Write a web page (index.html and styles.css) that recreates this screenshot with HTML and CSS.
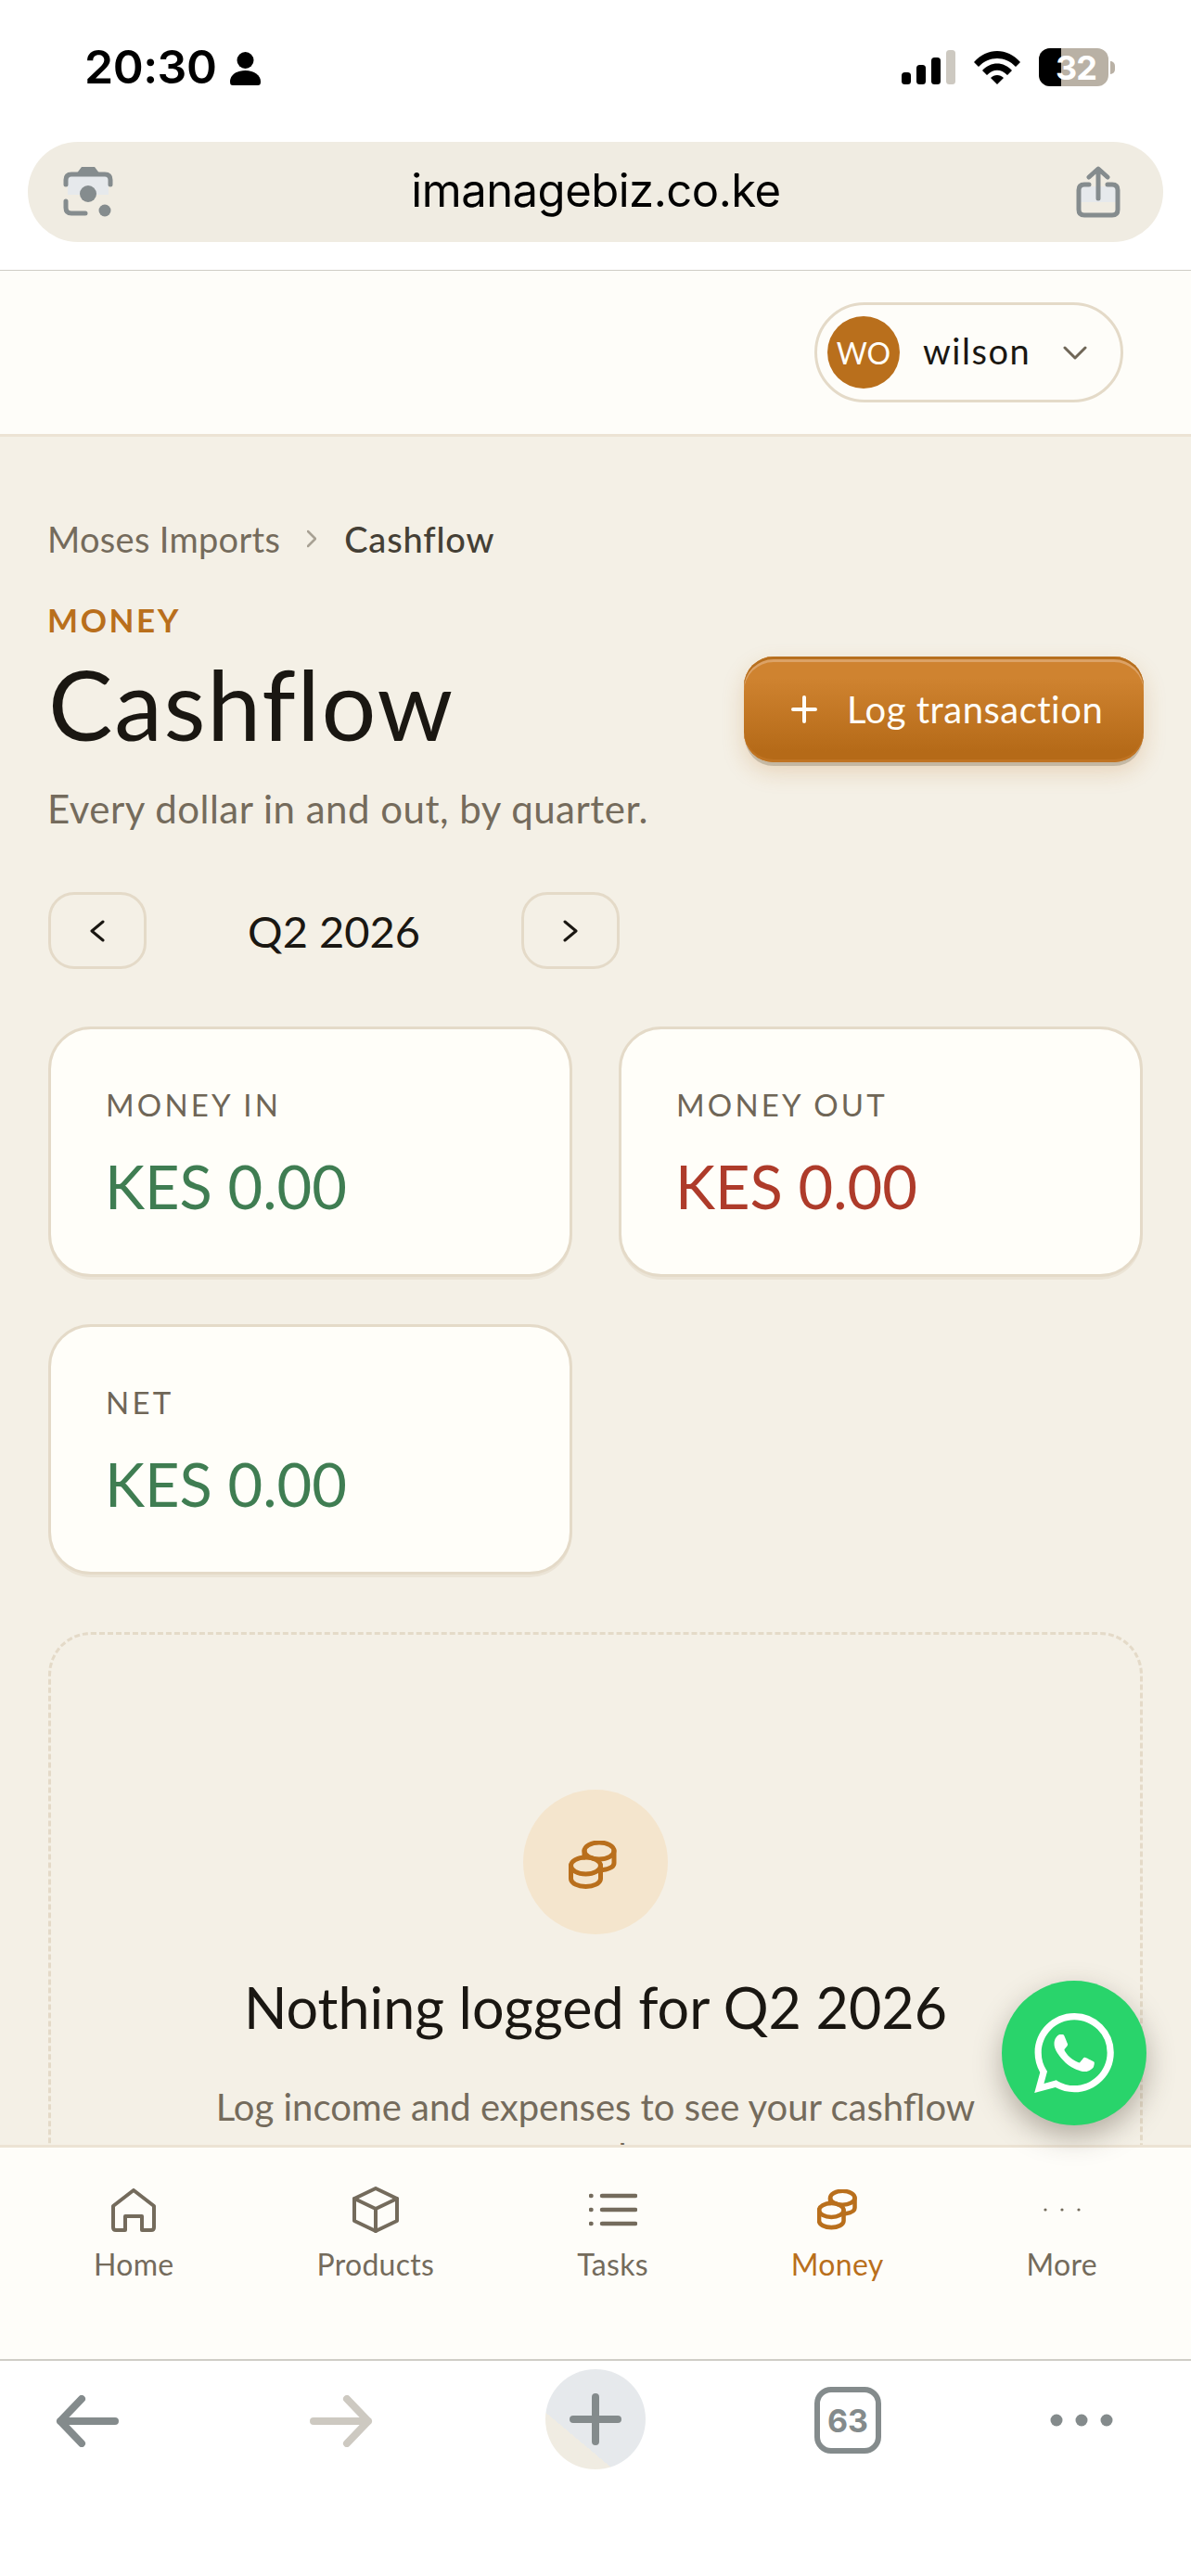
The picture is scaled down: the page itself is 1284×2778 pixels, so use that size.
FILE: index.html
```html
<!DOCTYPE html>
<html lang="en">
<head>
<meta charset="utf-8">
<title>Cashflow</title>
<link rel="stylesheet" href="styles.css">
</head>
<body>
<div class="phone">
  <div class="browser-top">
    <div class="status">
      <div class="status-left">
        <span class="clock">20:30</span>
        <svg class="person" width="33" height="36" viewBox="0 0 33 36"><circle cx="16.500" cy="9" r="9"/><path d="M0 32C0 25 7 20 16.500 20S33 25 33 32C33 35 32 36 30 36H3C1 36 0 35 0 32Z"/></svg>
      </div>
      <div class="status-right">
        <svg width="58" height="37" viewBox="0 0 58 37"><rect x="0" y="24" width="10" height="13" rx="3.500"/><rect x="16" y="16" width="10" height="21" rx="3.500"/><rect x="32" y="8" width="10" height="29" rx="3.500"/><rect x="48" y="0" width="10" height="37" rx="3.500" fill="#cdc9c1"/></svg>
        <svg width="50" height="37" viewBox="0 0 50 37"><path d="M0 13C14 -3 36 -3 50 13L45 18C34 6 16 6 5 18Z"/><path d="M9 22C18 12 32 12 41 22L36 27C29 20 21 20 14 27Z"/><path d="M18 30C22 26 28 26 32 30L25 37Z"/></svg>
        <div class="battery">
          <div class="battery-body"><span class="battery-fill"></span><span class="battery-num">32</span></div>
          <span class="battery-tip"></span>
        </div>
      </div>
    </div>
    <div class="address">
      <svg class="addr-icon" width="54" height="56" viewBox="0 0 54 56" fill="none" stroke="#858c8e" stroke-width="5" stroke-linecap="round"><rect x="5" y="11" width="44" height="20" fill="#e6e9ec" stroke="none"/><path d="M3 20V15C3 11 5 9 9 9H45C49 9 51 11 51 15V20"/><path d="M3 38V45C3 49 5 51 9 51H24"/><path d="M18 7L21 3H33L36 7Z" fill="#858c8e" stroke-width="4"/><circle cx="27" cy="30" r="9" fill="#858c8e" stroke="none"/><circle cx="45" cy="48" r="6.500" fill="#858c8e" stroke="none"/></svg>
      <span class="addr-text">imanagebiz.co.ke</span>
      <svg class="addr-icon" width="48" height="56" viewBox="0 0 48 56" fill="none" stroke="#858c8e" stroke-width="5" stroke-linecap="round" stroke-linejoin="round"><rect x="5" y="22" width="38" height="17" fill="#e6e9ec" stroke="none"/><path d="M14 20H9C5 20 3 22 3 26V47C3 51 5 53 9 53H39C43 53 45 51 45 47V26C45 22 43 20 39 20H34"/><path d="M24 35V4M14 12L24 3L34 12"/></svg>
    </div>
  </div>

  <header class="app-header">
    <div class="user-pill">
      <span class="avatar">WO</span>
      <span class="user-name">wilson</span>
      <svg width="26" height="15" viewBox="0 0 26 15" fill="none" stroke="#6f6657" stroke-width="3" stroke-linecap="round" stroke-linejoin="round"><path d="M2 2L13 13L24 2"/></svg>
    </div>
  </header>

  <main class="content">
    <nav class="crumbs">
      <span class="crumb">Moses Imports</span>
      <svg width="10" height="20" viewBox="0 0 10 20" fill="none" stroke="#a8a194" stroke-width="2.500" stroke-linecap="round" stroke-linejoin="round"><path d="M1 2L9 10L1 18"/></svg>
      <span class="crumb-current">Cashflow</span>
    </nav>
    <div class="page-head">
      <div class="page-titles">
        <div class="eyebrow">MONEY</div>
        <h1 class="title">Cashflow</h1>
        <p class="subtitle">Every dollar in and out, by quarter.</p>
      </div>
      <button class="primary-btn">
        <svg width="28" height="30" viewBox="0 0 28 30" fill="none" stroke="#fffdf8" stroke-width="4" stroke-linecap="round"><path d="M14 2V28M2 15H26"/></svg>
        <span>Log transaction</span>
      </button>
    </div>

    <div class="period">
      <button class="period-btn"><svg width="18" height="24" viewBox="0 0 18 24" fill="none" stroke="#1a1712" stroke-width="3" stroke-linecap="round" stroke-linejoin="round"><path d="M15 2L3 12L15 22"/></svg></button>
      <span class="period-label">Q2 2026</span>
      <button class="period-btn"><svg width="18" height="24" viewBox="0 0 18 24" fill="none" stroke="#1a1712" stroke-width="3" stroke-linecap="round" stroke-linejoin="round"><path d="M3 2L15 12L3 22"/></svg></button>
    </div>

    <section class="stats">
      <div class="stat">
        <div class="stat-label">MONEY IN</div>
        <div class="stat-value pos">KES 0.00</div>
      </div>
      <div class="stat">
        <div class="stat-label">MONEY OUT</div>
        <div class="stat-value neg">KES 0.00</div>
      </div>
      <div class="stat">
        <div class="stat-label">NET</div>
        <div class="stat-value pos">KES 0.00</div>
      </div>
    </section>

    <section class="empty">
      <div class="empty-icon">
        <svg width="52" height="54" viewBox="0 0 52 54" fill="none" stroke="#b96f1c" stroke-width="5" stroke-linecap="round" stroke-linejoin="round"><ellipse cx="33" cy="11" rx="16" ry="9"/><path d="M49 11V24C49 28 44 30.500 37 31.500M17 11V18"/><ellipse cx="18.500" cy="27" rx="16" ry="9"/><path d="M2.500 27V41C2.500 46 10 49.500 18.500 49.500S34.500 46 34.500 41V27"/></svg>
      </div>
      <h2 class="empty-title">Nothing logged for Q2 2026</h2>
      <p class="empty-text">Log income and expenses to see your cashflow trends.</p>
    </section>
  </main>

  <nav class="tabbar">
    <div class="tab">
      <svg class="tab-icon" width="48" height="47" viewBox="0 0 48 47" fill="none" stroke="#746b5c" stroke-width="4" stroke-linecap="round" stroke-linejoin="round"><path d="M24 2L46 19V42C46 44 45 45 43 45H33V30H15V45H5C3 45 2 44 2 42V19Z"/></svg>
      <span class="tab-label">Home</span>
    </div>
    <div class="tab">
      <svg class="tab-icon" width="50" height="50" viewBox="0 0 50 50" fill="none" stroke="#746b5c" stroke-width="4" stroke-linecap="round" stroke-linejoin="round"><path d="M25 2L48 13V37L25 48L2 37V13Z"/><path d="M2 13L25 24L48 13M25 24V48"/></svg>
      <span class="tab-label">Products</span>
    </div>
    <div class="tab">
      <svg class="tab-icon" width="52" height="36" viewBox="0 0 52 36" fill="none" stroke="#746b5c" stroke-width="4.500" stroke-linecap="round"><path d="M14 3H50M14 18H50M14 33H50"/><path d="M2 3H2.500M2 18H2.500M2 33H2.500"/></svg>
      <span class="tab-label">Tasks</span>
    </div>
    <div class="tab tab-active">
      <svg class="tab-icon" width="43" height="45" viewBox="0 0 52 54" fill="none" stroke="#b96f1c" stroke-width="5.500" stroke-linecap="round" stroke-linejoin="round"><ellipse cx="33" cy="11" rx="16" ry="9"/><path d="M49 11V24C49 28 44 30.500 37 31.500M17 11V18"/><ellipse cx="18.500" cy="27" rx="16" ry="9"/><path d="M2.500 27V41C2.500 46 10 49.500 18.500 49.500S34.500 46 34.500 41V27"/></svg>
      <span class="tab-label">Money</span>
    </div>
    <div class="tab">
      <svg class="tab-icon" width="40" height="6" viewBox="0 0 40 6" fill="#746b5c"><circle cx="2" cy="3" r="1.600"/><circle cx="20" cy="3" r="1.600"/><circle cx="38" cy="3" r="1.600"/></svg>
      <span class="tab-label">More</span>
    </div>
  </nav>

  <footer class="browser-bottom">
    <svg class="tool-arrow" width="68" height="56" viewBox="0 0 68 56" fill="none" stroke="#848b8c" stroke-width="8" stroke-linecap="round" stroke-linejoin="round"><path d="M64 28H5M28 4L5 28L28 52"/></svg>
    <svg class="tool-arrow" width="68" height="56" viewBox="0 0 68 56" fill="none" stroke="#cdc9c1" stroke-width="8" stroke-linecap="round" stroke-linejoin="round"><path d="M4 28H63M40 4L63 28L40 52"/></svg>
    <div class="new-tab">
      <svg width="56" height="56" viewBox="0 0 56 56" fill="none" stroke="#848b8c" stroke-width="8" stroke-linecap="round"><path d="M28 4V52M4 28H52"/></svg>
    </div>
    <div class="tab-count">63</div>
    <svg class="tool-more" width="68" height="16" viewBox="0 0 68 16" fill="#848b8c"><circle cx="7" cy="8" r="6.500"/><circle cx="34" cy="8" r="6.500"/><circle cx="61" cy="8" r="6.500"/></svg>
  </footer>

  <button class="wa-fab">
    <svg width="86" height="86" viewBox="0 0 24 24" fill="#fff"><path d="M17.472 14.382c-.297-.149-1.758-.867-2.030-.967-.273-.099-.471-.148-.670.150-.197.297-.767.966-.940 1.164-.173.199-.347.223-.644.075-.297-.150-1.255-.463-2.390-1.475-.883-.788-1.480-1.761-1.653-2.059-.173-.297-.018-.458.130-.606.134-.133.298-.347.446-.520.149-.174.198-.298.298-.497.099-.198.050-.371-.025-.520-.075-.149-.669-1.612-.916-2.207-.242-.579-.487-.500-.669-.510-.173-.008-.371-.010-.570-.010-.198 0-.520.074-.792.372-.272.297-1.040 1.016-1.040 2.479 0 1.462 1.065 2.875 1.213 3.074.149.198 2.096 3.200 5.077 4.487.709.306 1.262.489 1.694.625.712.227 1.360.195 1.871.118.571-.085 1.758-.719 2.006-1.413.248-.694.248-1.289.173-1.413-.074-.124-.272-.198-.570-.347m-5.421 7.403h-.004a9.870 9.870 0 01-5.031-1.378l-.361-.214-3.741.982.998-3.648-.235-.374a9.860 9.860 0 01-1.510-5.260c.001-5.450 4.436-9.884 9.888-9.884 2.640 0 5.122 1.030 6.988 2.898a9.825 9.825 0 012.893 6.994c-.003 5.450-4.437 9.884-9.885 9.884m8.413-18.297A11.815 11.815 0 0012.050 0C5.495 0 .160 5.335.157 11.892c0 2.096.547 4.142 1.588 5.945L.057 24l6.305-1.654a11.882 11.882 0 005.683 1.448h.005c6.554 0 11.890-5.335 11.893-11.893a11.821 11.821 0 00-3.480-8.413z"/></svg>
  </button>
</div>
</body>
</html>
```

FILE: styles.css
```css
* { box-sizing: border-box; }
html, body { margin: 0; padding: 0; }
body { background: #fff; }
button { font: inherit; padding: 0; cursor: pointer; }
h1, h2, p { margin: 0; }

.phone {
  position: relative;
  width: 1284px;
  height: 2778px;
  display: flex;
  flex-direction: column;
  overflow: hidden;
  font-family: "Lato", "Noto Sans", sans-serif;
  color: #1a1712;
  background: #f4f0e6;
}

/* browser chrome, top */
.browser-top {
  height: 292px;
  flex: none;
  background: #fff;
  border-bottom: 1px solid #cfcdc6;
  font-family: "Inter", "Liberation Sans", sans-serif;
  padding-top: 52px;
}
.status {
  height: 41px;
  display: flex;
  justify-content: space-between;
  align-items: center;
  padding: 0 82px 0 91px;
}
.status-left { display: flex; align-items: center; gap: 15px; }
.clock { font-size: 50px; font-weight: 600; color: #000; line-height: 41px; letter-spacing: -0.5px; }
.person { margin-top: 2px; }
.status-right { display: flex; align-items: center; gap: 20px; }
.battery { display: flex; align-items: center; gap: 2px; }
.battery-body {
  position: relative;
  width: 75px;
  height: 41px;
  border-radius: 12px;
  background: #b9b1a5;
  display: flex;
  align-items: center;
  justify-content: center;
}
.battery-fill { position: absolute; left: 0; top: 0; bottom: 0; width: 24px; background: #000; border-radius: 12px 0 0 12px; }
.battery-num { position: relative; color: #fff; font-size: 36px; line-height: 36px; font-weight: 700; letter-spacing: -1px; margin-left: 5px; }
.battery-tip { width: 5px; height: 14px; background: #b9b1a5; border-radius: 0 7px 7px 0; }

.address {
  margin: 60px 30px 0 30px;
  height: 108px;
  border-radius: 54px;
  background: #f0ece2;
  display: flex;
  align-items: center;
  justify-content: space-between;
  padding: 0 46px 0 38px;
}
.addr-text { font-size: 49px; color: #000; letter-spacing: -0.5px; margin: -3px 0 0 3px; }

/* app header */
.app-header {
  height: 179px;
  flex: none;
  background: #fefdf9;
  border-bottom: 3px solid #ece3d4;
  display: flex;
  justify-content: flex-end;
  align-items: center;
  padding: 0 73px 0 0;
}
.user-pill {
  width: 333px;
  height: 108px;
  border: 3px solid #e4dac8;
  border-radius: 54px;
  display: flex;
  align-items: center;
  padding: 0 36px 0 11px;
}
.avatar {
  width: 78px;
  height: 78px;
  border-radius: 50%;
  background: #b96f1c;
  color: #fffdf8;
  font-size: 32px;
  display: flex;
  align-items: center;
  justify-content: center;
  flex: none;
}
.user-name { font-size: 38px; letter-spacing: 1.5px; margin: -4px 0 0 25px; flex: 1; }

/* content */
.content {
  flex: 1;
  min-height: 0;
  overflow: hidden;
  padding: 84px 52px 0;
}
.crumbs { display: flex; align-items: center; height: 52px; font-size: 38px; letter-spacing: .3px; }
.crumb { color: #746b5c; margin-left: -1px; }
.crumbs svg { margin: 0 30px 0 29px; }
.crumb-current { color: #443f35; font-weight: 500; letter-spacing: .8px; }

.page-head { display: flex; justify-content: space-between; align-items: flex-start; margin-top: 40px; }
.eyebrow { font-size: 35px; font-weight: 700; color: #b96f1c; letter-spacing: 2.600px; line-height: 42px; margin-left: -1px; }
.title { font-size: 104px; font-weight: 400; line-height: 120px; margin-top: 10px; color: #1a1712; letter-spacing: 1.7px; }
.subtitle { font-size: 42px; color: #746b5c; line-height: 50px; margin-top: 28px; letter-spacing: .5px; margin-left: -1px; }

.primary-btn {
  width: 431px;
  height: 114px;
  margin: 61px -1px 0 0;
  border: 0;
  border-radius: 32px;
  color: #fffdf8;
  font-size: 40px;
  letter-spacing: .5px;
  background: linear-gradient(#cf8330 0%, #cf8330 20%, #b56a18 90%);
  box-shadow: inset 0 3px 0 #b76f1e, inset 0 6px 0 #dca266, inset 0 -3px 0 #bf7322, 0 5px 0 -1px rgba(150,140,120,.45), 0 10px 24px rgba(185,111,28,.22);
  display: flex;
  align-items: center;
  gap: 32px;
  padding: 0 0 0 51px;
}

.period { display: flex; align-items: center; margin-top: 65px; }
.period-btn {
  width: 106px;
  height: 83px;
  border: 3px solid #e4dac8;
  border-radius: 28px;
  background: transparent;
  display: flex;
  align-items: center;
  justify-content: center;
}
.period-label { width: 404px; text-align: center; font-size: 47px; }

.stats { display: grid; grid-template-columns: 565px 565px; gap: 51px 50px; margin-top: 62px; }
.stat {
  height: 270px;
  background: #fffef9;
  border: 3px solid #e4dac8;
  border-radius: 46px;
  box-shadow: 0 4px 0 -1px #ebe4d6;
  padding: 59px 59px 0;
}
.stat-label { font-size: 33px; color: #6f6657; letter-spacing: 3.200px; line-height: 44px; }
.stat-value { font-size: 65px; letter-spacing: 0; line-height: 80px; margin: 26px 0 0 -1px; }
.pos { color: #3f7d52; }
.neg { color: #ae3b2a; }

.empty {
  margin-top: 62px;
  border: 3px dashed #e4dac8;
  border-radius: 46px;
  height: 900px;
  padding: 167px 130px 0;
  display: flex;
  flex-direction: column;
  align-items: center;
}
.empty-icon {
  width: 156px;
  height: 156px;
  border-radius: 50%;
  background: #f4e5cd;
  display: flex;
  align-items: center;
  justify-content: center;
}
.empty-icon svg { margin: 8px 7px 0 0; }
.empty-title { font-size: 61px; font-weight: 400; line-height: 76px; margin-top: 41px; color: #1a1712; }
.empty-text { font-size: 40px; line-height: 54px; color: #746b5c; text-align: center; margin-top: 42px; width: 860px; }

/* bottom tabs */
.tabbar {
  height: 231px;
  flex: none;
  position: relative;
  background: #fefdf9;
  border-top: 3px solid #ece3d4;
  display: flex;
  justify-content: space-around;
  align-items: flex-start;
  padding: 0 24px;
}
.tab {
  height: 148px;
  display: flex;
  flex-direction: column;
  align-items: center;
  justify-content: flex-end;
  color: #746b5c;
}
.tab-icon { margin: auto 0; position: relative; top: 15px; }
.tab-label { font-size: 32px; letter-spacing: .3px; line-height: 44px; }
.tab-active { color: #b96f1c; }

/* browser chrome, bottom */
.browser-bottom {
  height: 234px;
  flex: none;
  position: relative;
  background: #fff;
  border-top: 2px solid #cfcdc6;
  display: flex;
  align-items: flex-start;
  padding: 9px 0 0 60px;
}
.tool-arrow { margin-top: 28px; }
.tool-arrow + .tool-arrow { margin-left: 206px; }
.new-tab {
  width: 108px;
  height: 108px;
  border-radius: 50%;
  margin-left: 186px;
  background: linear-gradient(40deg, #f0ece2 31%, #e6e9ec 31%);
  display: flex;
  align-items: center;
  justify-content: center;
}
.tab-count {
  width: 72px;
  height: 72px;
  margin: 19px 0 0 182px;
  border: 6px solid #848b8c;
  border-radius: 18px;
  color: #848b8c;
  font-family: "Inter", "Liberation Sans", sans-serif;
  font-size: 34px;
  font-weight: 700;
  display: flex;
  align-items: center;
  justify-content: center;
}
.tool-more { margin: 47px 0 0 182px; }

/* whatsapp */
.wa-fab {
  position: absolute;
  left: 1080px;
  top: 2136px;
  width: 156px;
  height: 156px;
  border: 0;
  border-radius: 50%;
  background: #29d46b;
  box-shadow: 0 12px 30px rgba(60,50,35,.35);
  display: flex;
  align-items: center;
  justify-content: center;
}
```
